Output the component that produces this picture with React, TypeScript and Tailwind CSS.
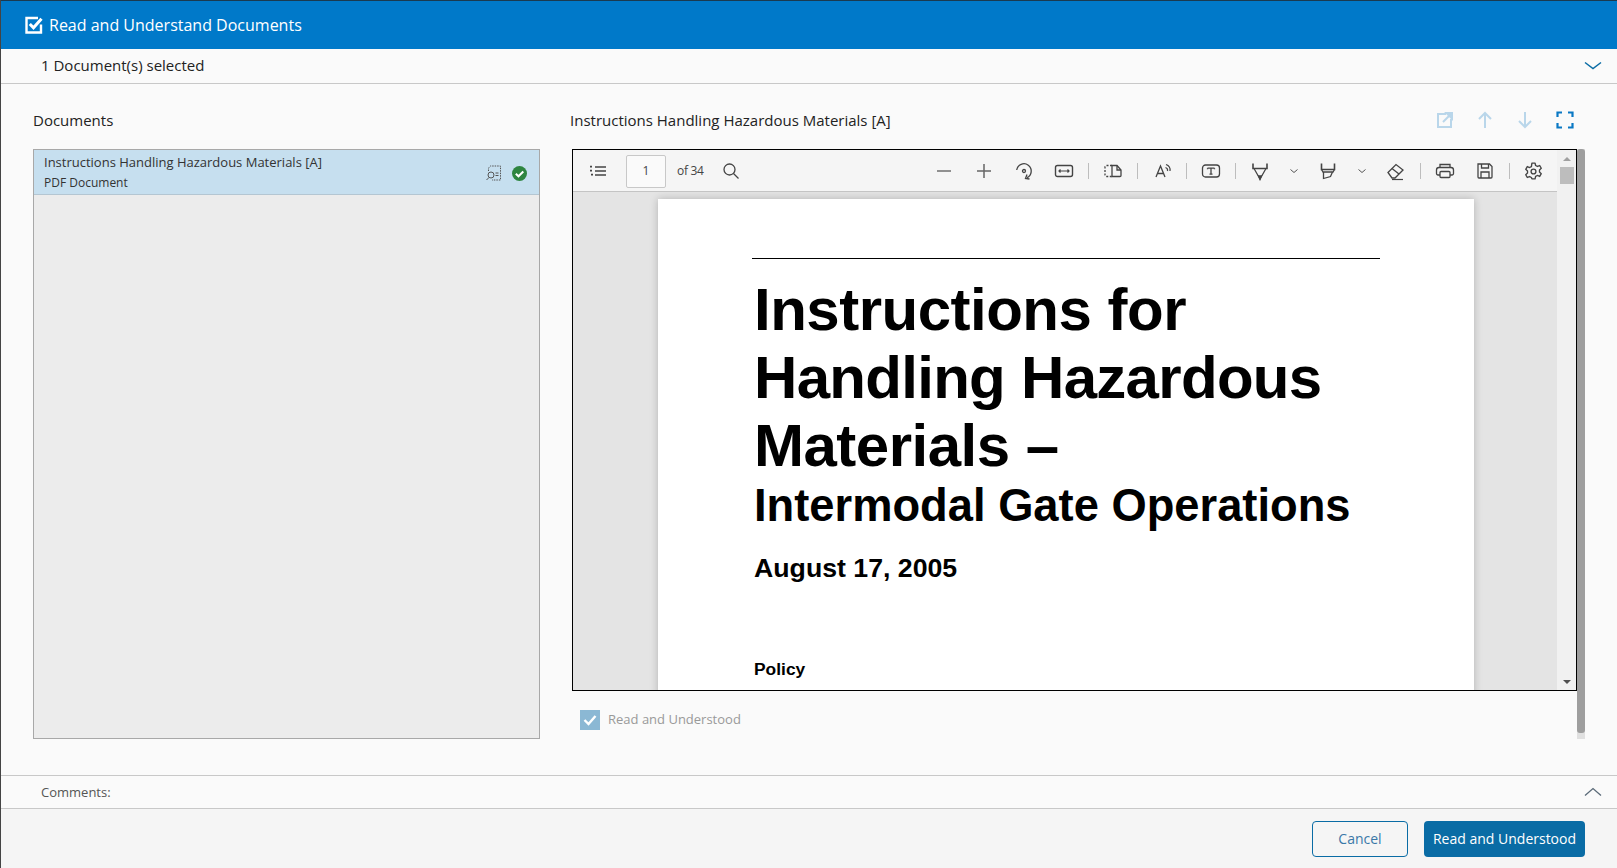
import React from "react";

const S = ({ w = 20, h = 20, vb = "0 0 20 20", children, className = "" }: { w?: number; h?: number; vb?: string; children: React.ReactNode; className?: string }) => (
  <svg width={w} height={h} viewBox={vb} fill="none" stroke="currentColor" strokeWidth="1.3" className={className}>{children}</svg>
);

const Cell = ({ children }: { children: React.ReactNode }) => (
  <div className="w-[40px] h-[40px] flex items-center justify-center text-[#444]">{children}</div>
);
const Sep = () => (
  <div className="w-[9px] flex justify-center"><div className="w-px h-[16px] bg-[#bdbdbd]" /></div>
);
const Chev = () => (
  <div className="w-[26px] h-[40px] flex items-center justify-center text-[#555]">
    <S w={10} h={10} vb="0 0 10 10" ><path d="M1.5 3.5 5 6.5l3.5-3" strokeWidth="1" /></S>
  </div>
);

function Toolbar() {
  return (
    <div className="h-[42px] shrink-0 bg-[#f5f5f5] border-b border-[#c4c4c4] flex items-center justify-between pt-[1px]">
      <div className="flex items-center">
        <div className="w-[53px] flex justify-center text-[#444] -ml-[2px] mr-[2px]">
          <S w={18} h={14} vb="0 0 18 14"><path d="M6 3h11M6 7h11M6 11h11" /><path d="M1 2.6h2M1 6.6h2M2 10.6h2" strokeWidth="1.6" /></S>
        </div>
        <div className="w-[40px] h-[33px] border border-[#c8c8c8] rounded-[2px] bg-[#fafafa] flex items-center justify-center text-[12px] text-[#444]">1</div>
        <div className="ml-[11px] text-[12px] tracking-[-0.3px] text-[#444]">of 34</div>
        <div className="ml-[18px] text-[#444]">
          <S w={18} h={18} vb="0 0 18 18"><circle cx="7.5" cy="7.5" r="5.5" /><path d="m11.5 11.5 5 5" /></S>
        </div>
      </div>
      <div className="flex items-center pr-[4px]">
        <Cell><S><path d="M3 10h14" strokeWidth="1.6" stroke="#777" /></S></Cell>
        <Cell><S><path d="M3 10h14M10 3v14" strokeWidth="1.5" stroke="#666" /></S></Cell>
        <Cell><S><path d="M2.700 9A7.300 7.300 0 1 1 13 16.700" /><circle cx="10" cy="10" r="1.500" /><path d="m13 13.500-1.500 4 4 .5" /></S></Cell>
        <Cell><S vb="0 0 20 20"><rect x="1.5" y="4.5" width="17" height="11" rx="2" strokeWidth="1.4" /><path d="M5 10h10M6.5 8.5 5 10l1.500 1.500M13.500 8.500 15 10l-1.500 1.500" strokeWidth="1.200" /></S></Cell>
        <Sep />
        <Cell><S><path d="M9 4.500H3.500a1.500 1.500 0 0 0-1.500 1.500v8a1.500 1.500 0 0 0 1.500 1.500H9" strokeDasharray="2 1.500" /><path d="M9 4.500v11h8a1 1 0 0 0 1-1V9l-4-4.500z" /><path d="M14 4.500V9h4" /></S></Cell>
        <Sep />
        <Cell><S><path d="m4 16 4.500-11 4.500 11M5.500 12.500h6" /><path d="M13.500 6.500a3 3 0 0 1 2 3.500M14 3.500a6 6 0 0 1 4 6.500" strokeWidth="1.200" /></S></Cell>
        <Sep />
        <Cell><S><rect x="1.500" y="4" width="17" height="12" rx="3" strokeWidth="1.300" /><path d="M6.500 7.200h7M10 7.200v6M8.500 13.200h3M6.500 7.200v1M13.500 7.200v1" /></S></Cell>
        <Sep />
        <Cell><S><path d="M3 2.500v5h14v-5" strokeWidth="1.600" /><path d="M4 7.500 10 18l6-10.500" /><path d="m8.500 15 1.500 3.500 1.500-3.500z" fill="currentColor" /></S></Cell>
        <div className="ml-[1px]"><Chev /></div>
        <div className="ml-[1px]"><Cell><S><path d="M3.500 2.500v6h13v-6" strokeWidth="1.600" /><path d="m3.500 8.500 1.500 2.500h10l1.500-2.500" /><path d="M5.500 11v6.500l7-2 2-4.500" /></S></Cell></div>
        <div className="ml-[1px]"><Chev /></div>
        <div className="ml-[1px]"><Cell><S><path d="m2 11.500 8-8 7 5.500-8 8H6z" /><path d="m6 7.500 7 5.500" /><path d="M6 18.500h11" strokeWidth="1.200" /></S></Cell></div>
        <Sep />
        <Cell><S><path d="M5 7V3.500h10V7" /><path d="M5 14H3a1.500 1.500 0 0 1-1.500-1.500V9A2.500 2.500 0 0 1 4 6.500h12A2.500 2.500 0 0 1 18.500 9v3.500A1.500 1.500 0 0 1 17 14h-2" /><rect x="5" y="10.500" width="10" height="6" rx="1" /></S></Cell>
        <Cell><S><path d="M3 3h11.500L17 5.500V16a1 1 0 0 1-1 1H4a1 1 0 0 1-1-1z" /><path d="M6.500 3v4h7V3M6 17v-6h8v6" /></S></Cell>
        <div className="-mr-[1px]"><Sep /></div>
        <Cell><S w={21} h={21}><path d="M8.500 2h3l.5 2.300 1.700.9 2.200-.9 1.500 2.600-1.700 1.600v2l1.700 1.600-1.500 2.600-2.200-.9-1.700.9-.5 2.300h-3L8 15.700l-1.700-.9-2.200.9-1.500-2.600 1.700-1.600v-2L2.600 7.900l1.500-2.600 2.200.9L8 5.300z" strokeLinejoin="round" /><circle cx="10" cy="10" r="2.300" /></S></Cell>
      </div>
    </div>
  );
}

function PdfPage() {
  return (
    <div className="w-[816px] ml-[85px] mt-[7px] mb-[200px] h-[1056px] bg-white shadow-[0_0_8px_rgba(0,0,0,0.22)] pt-[59px] pl-[94px] text-black font-['Liberation_Sans',Arial,sans-serif] font-bold">
      <div className="w-[628px] h-px bg-black" />
      <div className="pl-[2px] pt-[17px] text-[60px] leading-[68px]">
        <div className="tracking-[-0.5px]">Instructions for</div>
        <div className="tracking-[-0.7px]">Handling Hazardous</div>
        <div className="tracking-[-0.5px]">Materials –</div>
      </div>
      <div className="pl-[2px] text-[45.3px] leading-[56px] -mt-[2px]">Intermodal Gate Operations</div>
      <div className="pl-[2px] mt-[18px] text-[26.7px] leading-[32px]">August 17, 2005</div>
      <div className="pl-[2px] mt-[73px] text-[17.4px] leading-[24px]">Policy</div>
    </div>
  );
}

export default function App() {
  return (
    <div className="w-full h-screen flex flex-col overflow-hidden bg-[#fafafa] border-l border-[#444] text-[#222] font-['Open_Sans',sans-serif]">
      <div className="h-[49px] shrink-0 bg-[#0079c9] border-t border-[#1a3a50] flex items-center pl-[24px] text-white">
        <svg width="18" height="18" viewBox="0 0 18 18" fill="none" className="mr-[6px]">
          <path d="M16 8.500V16.500H1.500V2H13" stroke="#fff" strokeWidth="2.400" />
          <path d="m4.800 8 3.700 3.800 8-9" stroke="#fff" strokeWidth="3" />
        </svg>
        <span className="text-[16px]">Read and Understand Documents</span>
      </div>
      <div className="h-[35px] shrink-0 border-b border-[#c8c8c8] flex items-center justify-between pl-[40px] pr-[15px] text-[15px] text-[#222]">
        <span className="-mt-[2px]">1 Document(s) selected</span>
        <svg width="18" height="10" viewBox="0 0 18 10" fill="none"><path d="m1 1.500 8 6 8-6" stroke="#0a6ca5" strokeWidth="1.500" /></svg>
      </div>
      <div className="flex-1 flex pl-[32px] pt-[24px] min-h-0">
        <div className="w-[507px] shrink-0">
          <div className="h-[24px] flex items-center text-[15px]">Documents</div>
          <div className="mt-[17px] h-[590px] bg-[#ececec] border border-[#a8a8a8]">
            <div className="h-[45px] bg-[#c6dfef] border-b border-[#b4c6d2] pl-[10px] pr-[12px] flex items-center justify-between">
              <div className="text-[#333]">
                <div className="text-[13px] leading-[20px]">Instructions Handling Hazardous Materials [A]</div>
                <div className="text-[12px] leading-[20px] mt-px">PDF Document</div>
              </div>
              <div className="flex items-center gap-[11px] mt-[2px]">
                <svg width="15" height="16" viewBox="0 0 15 16" fill="none" stroke="#555" strokeWidth="1">
                  <path d="M2.500 6V3l2-2h10v14H6" strokeDasharray="1.500 1" />
                  <circle cx="5" cy="10" r="3" />
                  <path d="m3 12.500-2.500 2.500M9.500 8h3M9.500 10.500h3" />
                </svg>
                <svg width="15" height="15" viewBox="0 0 15 15">
                  <circle cx="7.500" cy="7.500" r="7.500" fill="#2e8540" />
                  <path d="m3.800 7.700 2.700 2.600 4.800-4.800" fill="none" stroke="#fff" strokeWidth="2" />
                </svg>
              </div>
            </div>
          </div>
        </div>
        <div className="ml-[31px] w-[1014px] shrink-0">
          <div className="h-[24px] flex items-center justify-between text-[15px]">
            <span className="-ml-[1px]">Instructions Handling Hazardous Materials [A]</span>
            <div className="flex items-center">
              <div className="w-[40px] flex justify-center text-[#b9d6ea]">
                <S w={18} h={18} vb="0 0 18 18"><path d="M10 3H2v13h13V8" strokeWidth="2" /><path d="M7 11 15 3M10.500 2H16v5.500z" strokeWidth="2" fill="currentColor" /></S>
              </div>
              <div className="w-[40px] flex justify-center text-[#b9d6ea]">
                <S w={16} h={18} vb="0 0 16 18"><path d="M8 17V2M2 8l6-6 6 6" strokeWidth="2" /></S>
              </div>
              <div className="w-[40px] flex justify-center text-[#b9d6ea]">
                <S w={16} h={18} vb="0 0 16 18"><path d="M8 1v15M2 10l6 6 6-6" strokeWidth="2" /></S>
              </div>
              <div className="w-[40px] flex justify-center text-[#0a78c4]">
                <S w={18} h={18} vb="0 0 18 18"><path d="M1.500 6V1.500H6M12 1.500h4.500V6M16.500 12v4.500H12M6 16.500H1.500V12" strokeWidth="2.200" /></S>
              </div>
            </div>
          </div>
          <div className="mt-[17px] h-[590px] flex">
            <div className="w-[1005px] ml-px shrink-0">
              <div className="h-[542px] border border-black flex flex-col bg-[#e4e4e4] overflow-hidden">
                <div className="flex-1 min-h-0 flex">
                  <div className="flex-1 min-w-0 flex flex-col">
                    <Toolbar />
                    <div className="flex-1 min-h-0 overflow-hidden"><PdfPage /></div>
                  </div>
                  <div className="w-[19px] shrink-0 bg-[#f1f1f1] flex flex-col items-center">
                    <div className="h-[17px] flex items-center justify-center">
                      <div className="w-0 h-0 border-l-[4px] border-r-[4px] border-b-[4px] border-l-transparent border-r-transparent border-b-[#a0a0a0]" />
                    </div>
                    <div className="w-[14px] h-[17px] bg-[#bdbdbd]" />
                    <div className="flex-1" />
                    <div className="h-[17px] flex items-center justify-center">
                      <div className="w-0 h-0 border-l-[4px] border-r-[4px] border-t-[4px] border-l-transparent border-r-transparent border-t-[#505050]" />
                    </div>
                  </div>
                </div>
              </div>
              <div className="mt-[19px] ml-[8px] flex items-center gap-[8px]">
                <div className="w-[20px] h-[20px] bg-[#8bb8d4] flex items-center justify-center">
                  <svg width="14" height="12" viewBox="0 0 14 12" fill="none"><path d="m1.500 6 4 4 7-8" stroke="#fff" strokeWidth="2.400" /></svg>
                </div>
                <span className="text-[13px] text-[#999]">Read and Understood</span>
              </div>
            </div>
            <div className="w-[8px] bg-[#e0e0e0]">
              <div className="h-[584px] bg-[#9e9e9e] rounded-[3px]" />
            </div>
          </div>
        </div>
      </div>
      <div className="h-[34px] shrink-0 border-y border-[#c8c8c8] flex items-center justify-between pl-[40px] pr-[15px]">
        <span className="text-[13px] text-[#555] mt-[1px]">Comments:</span>
        <svg width="18" height="10" viewBox="0 0 18 10" fill="none"><path d="m1 8.500 8-7 8 7" stroke="#5a6a78" strokeWidth="1.300" /></svg>
      </div>
      <div className="h-[59px] shrink-0 bg-[#f5f5f5] flex items-center justify-end pr-[32px] gap-[16px] pt-[1px]">
        <button className="w-[96px] h-[36px] border border-[#0a6ca5] rounded-[4px] text-[14px] text-[#3a78a8] pb-[2px]">Cancel</button>
        <button className="w-[161px] h-[36px] bg-[#0a6ca5] rounded-[4px] text-[14px] text-white pb-[2px]">Read and Understood</button>
      </div>
    </div>
  );
}
